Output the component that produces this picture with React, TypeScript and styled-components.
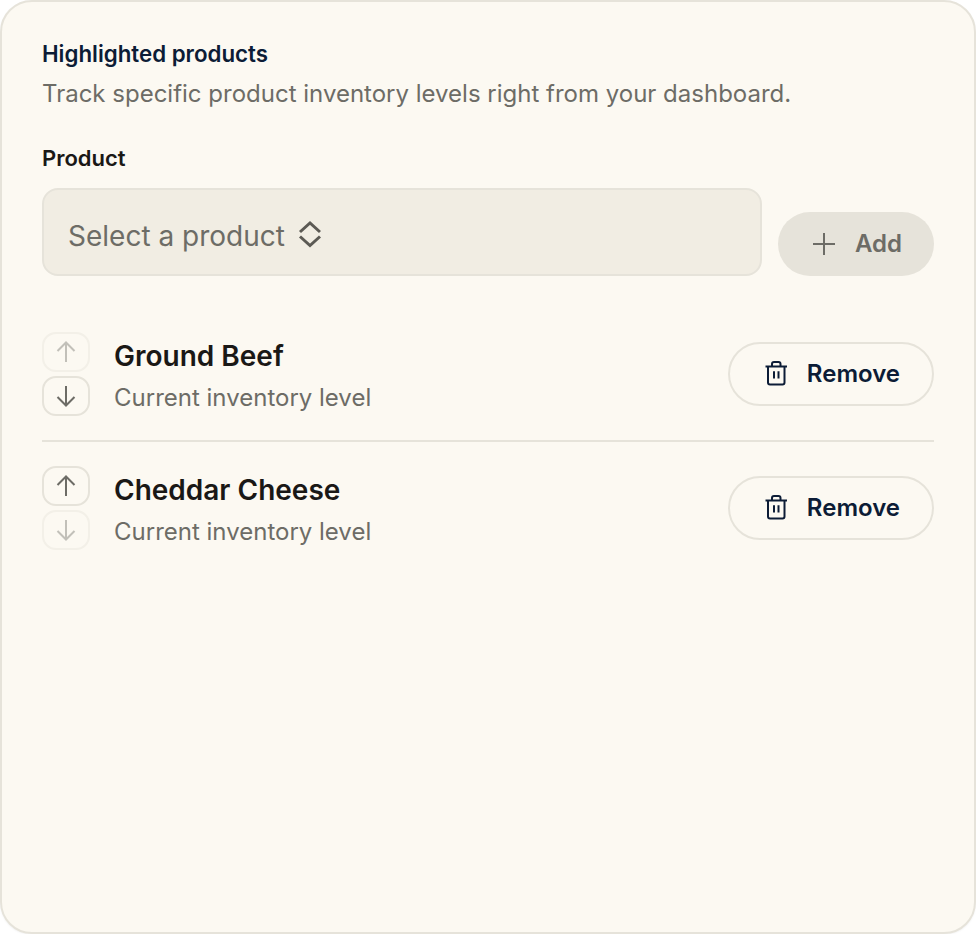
import React from 'react';
import styled, { createGlobalStyle } from 'styled-components';

const GlobalStyle = createGlobalStyle`
  html, body {
    margin: 0;
    padding: 0;
    background: #ffffff;
    font-family: Inter, "Liberation Sans", sans-serif;
  }
  * {
    box-sizing: border-box;
  }
`;

const Card = styled.div`
  width: 976px;
  height: 934px;
  padding: 40px;
  background: #fcf9f2;
  border: 2px solid #e6e3da;
  border-radius: 32px;
  box-shadow: 0 1px 2px rgba(0, 0, 0, 0.05);
`;

const Title = styled.div`
  font-size: 22.3px;
  line-height: 24px;
  font-weight: 600;
  color: #0c1c36;
`;

const Description = styled.div`
  margin-top: 12px;
  font-size: 24px;
  line-height: 32px;
  color: #6d6c66;
`;

const Label = styled.div`
  margin-top: 32px;
  font-size: 22px;
  line-height: 32px;
  font-weight: 600;
  color: #1a1816;
`;

const AddRow = styled.div`
  display: flex;
  align-items: flex-end;
  gap: 16px;
  margin-top: 14px;
`;

const SelectBox = styled.div`
  flex: 1;
  height: 88px;
  display: flex;
  align-items: center;
  gap: 9px;
  padding: 8px 24px 0;
  background: #f1ede3;
  border: 2px solid #e6e3da;
  border-radius: 16px;
  font-size: 28px;
  color: #6d6c66;
`;

const SelectIcon = styled.svg`
  width: 32px;
  height: 32px;
  margin-top: -4px;
  fill: none;
  stroke: #5c5a54;
  stroke-width: 3;
`;

const PillButton = styled.button<{ $muted?: boolean }>`
  height: 64px;
  display: flex;
  align-items: center;
  justify-content: center;
  gap: 15px;
  padding: 0 32px 0 30px;
  border-radius: 32px;
  font-family: inherit;
  font-size: 24px;
  font-weight: 600;
  background: ${(p) => (p.$muted ? '#e6e3da' : 'transparent')};
  border: ${(p) => (p.$muted ? 'none' : '2px solid #e6e3da')};
  color: ${(p) => (p.$muted ? '#6d6c66' : '#0c1c36')};
`;

const ButtonLabel = styled.span`
  margin-top: -2px;
`;

const Icon = styled.svg`
  width: 32px;
  height: 32px;
  flex: none;
  fill: none;
  stroke: currentColor;
  stroke-width: 2;
`;

const List = styled.div`
  margin-top: 32px;
`;

const Row = styled.div<{ $first?: boolean }>`
  display: flex;
  align-items: center;
  gap: 24px;
  padding: 24px 0;
  border-top: ${(p) => (p.$first ? 'none' : '2px solid #e6e3da')};
`;

const Arrows = styled.div`
  display: flex;
  flex-direction: column;
  gap: 4px;
`;

const ArrowButton = styled.button<{ $disabled?: boolean }>`
  width: 48px;
  height: 40px;
  display: flex;
  align-items: center;
  justify-content: center;
  padding: 0;
  background: transparent;
  border: 2px solid #e6e3da;
  border-radius: 14px;
  color: #6d6c66;
  opacity: ${(p) => (p.$disabled ? 0.4 : 1)};
`;

const Info = styled.div`
  flex: 1;
`;

const Name = styled.div`
  font-size: 28px;
  line-height: 44px;
  font-weight: 600;
  color: #1a1816;
`;

const Sub = styled.div`
  margin-top: 4px;
  font-size: 24px;
  line-height: 32px;
  color: #6d6c66;
`;

const products = [
  { name: 'Ground Beef', upDisabled: true, downDisabled: false },
  { name: 'Cheddar Cheese', upDisabled: false, downDisabled: true },
];

const App = () => {
  return (
    <>
      <GlobalStyle />
      <Card>
        <Title>Highlighted products</Title>
        <Description>Track specific product inventory levels right from your dashboard.</Description>
        <Label>Product</Label>
        <AddRow>
          <SelectBox>
            Select a product
            <SelectIcon viewBox="0 0 32 32">
              <path d="M6 14L16 5L26 14" />
              <path d="M6 18.5L16 27.5L26 18.5" />
            </SelectIcon>
          </SelectBox>
          <PillButton $muted>
            <Icon viewBox="0 0 32 32">
              <path d="M16 5V27M5 16H27" />
            </Icon>
            <ButtonLabel>Add</ButtonLabel>
          </PillButton>
        </AddRow>
        <List>
          {products.map((product, i) => (
            <Row key={product.name} $first={i === 0}>
              <Arrows>
                <ArrowButton $disabled={product.upDisabled}>
                  <Icon viewBox="0 0 32 32">
                    <path d="M16 6.5V26M7.5 15L16 6.5L24.5 15" />
                  </Icon>
                </ArrowButton>
                <ArrowButton $disabled={product.downDisabled}>
                  <Icon viewBox="0 0 32 32">
                    <path d="M16 25.5V6M7.5 17L16 25.5L24.5 17" />
                  </Icon>
                </ArrowButton>
              </Arrows>
              <Info>
                <Name>{product.name}</Name>
                <Sub>Current inventory level</Sub>
              </Info>
              <PillButton>
                <Icon viewBox="0 0 32 32">
                  <path d="M5.5 8.5H27" />
                  <path d="M8 8.5V24.5A2 2 0 0 0 10 26.5H22.5A2 2 0 0 0 24.5 24.5V8.5" />
                  <path d="M12 8.5V6A2 2 0 0 1 14 4H18.5A2 2 0 0 1 20.5 6V8.5" />
                  <path d="M14 13.3V20.5M18.5 13.3V20.5" />
                </Icon>
                <ButtonLabel>Remove</ButtonLabel>
              </PillButton>
            </Row>
          ))}
        </List>
      </Card>
    </>
  );
};

export default App;
